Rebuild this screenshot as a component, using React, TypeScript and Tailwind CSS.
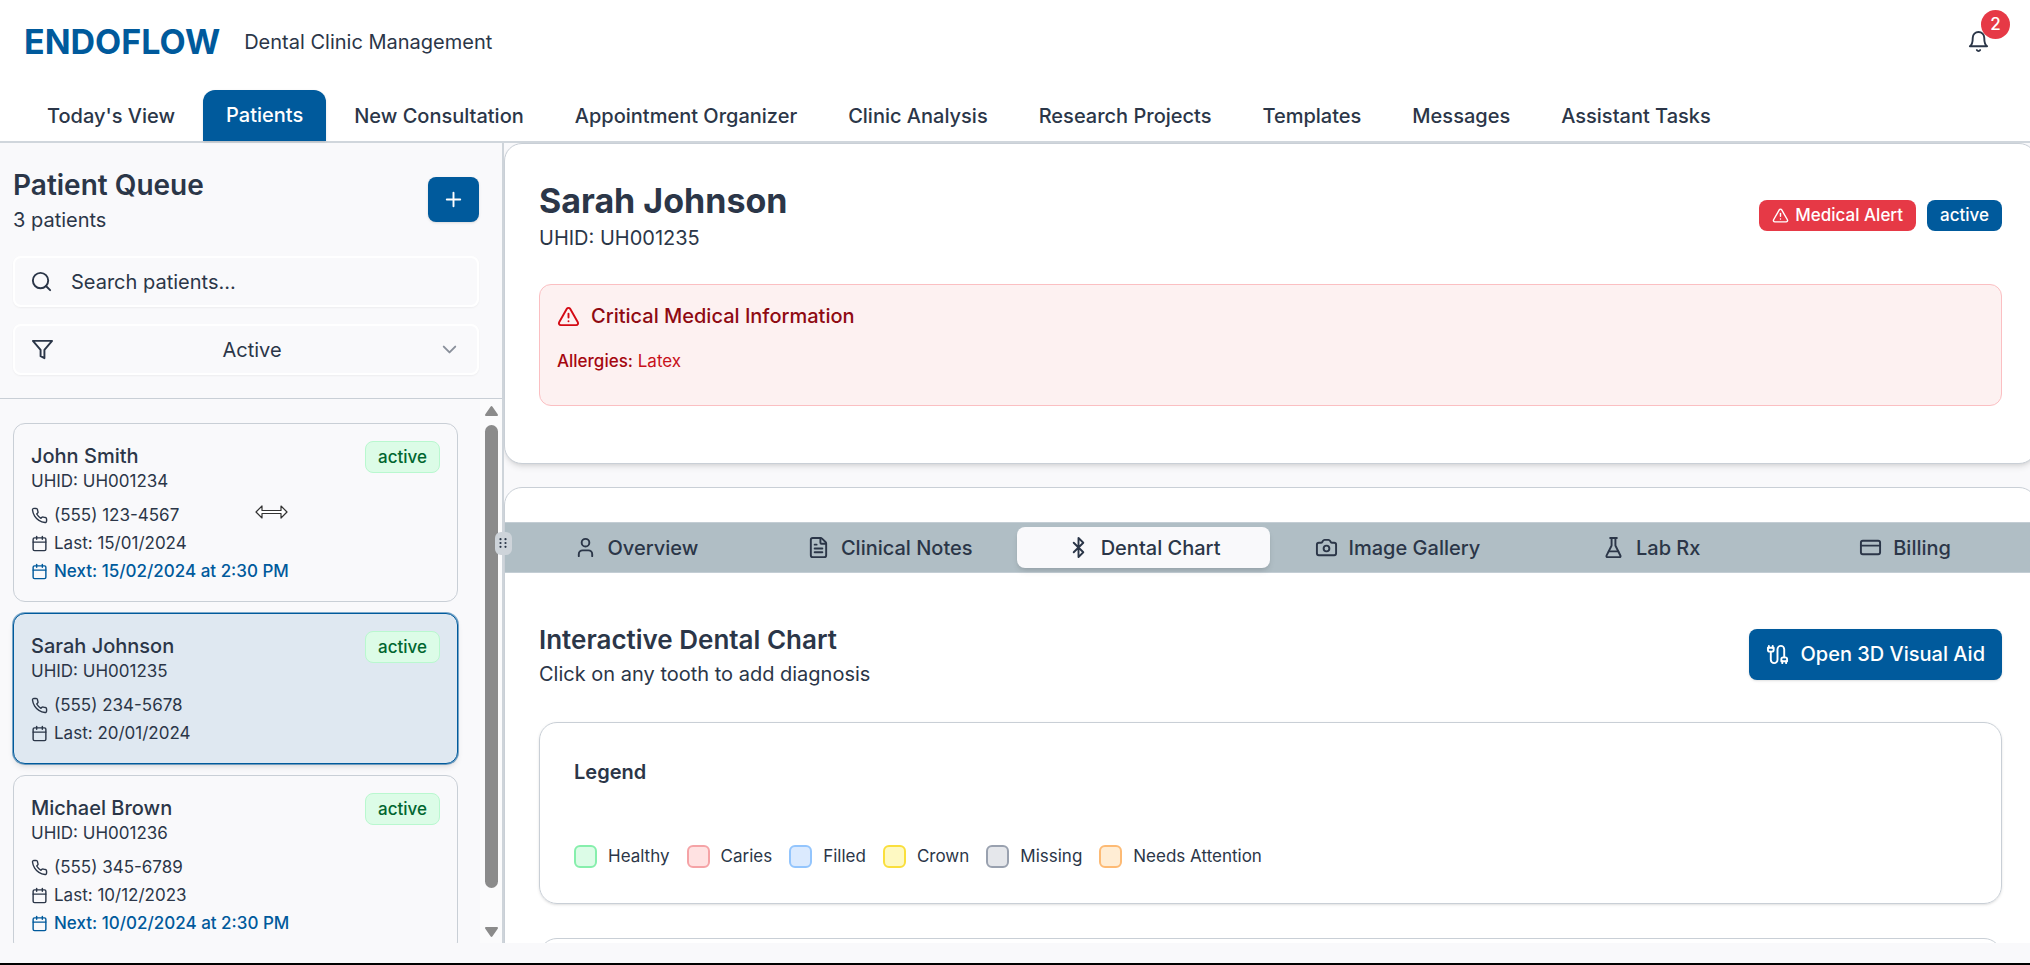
import type { ReactNode } from "react";
import { AlertTriangle, Bluetooth, Calendar, Camera, ChevronDown, CreditCard, FileText, Plus, Search, User } from "lucide-react";

type IconProps = { className?: string };

function LineIcon({ className, children }: IconProps & { children: ReactNode }) {
  return (
    <svg
      viewBox="0 0 24 24"
      fill="none"
      stroke="currentColor"
      strokeWidth="2"
      strokeLinecap="round"
      strokeLinejoin="round"
      aria-hidden="true"
      className={className}
    >
      {children}
    </svg>
  );
}

function BellIcon({ className }: IconProps) {
  return (
    <LineIcon className={className}>
      <path d="M6 8a6 6 0 0 1 12 0c0 7 3 9 3 9H3s3-2 3-9" />
      <path d="M10.3 21a1.94 1.94 0 0 0 3.4 0" />
    </LineIcon>
  );
}

function FilterIcon({ className }: IconProps) {
  return (
    <LineIcon className={className}>
      <path d="M22 3H2l8 9.460V19l4 2v-8.540L22 3z" />
    </LineIcon>
  );
}

function PhoneIcon({ className }: IconProps) {
  return (
    <LineIcon className={className}>
      <path d="M22 16.92v3a2 2 0 0 1-2.18 2 19.79 19.79 0 0 1-8.63-3.07 19.5 19.5 0 0 1-6-6 19.79 19.79 0 0 1-3.07-8.67A2 2 0 0 1 4.11 2h3a2 2 0 0 1 2 1.72 12.84 12.84 0 0 0 .7 2.81 2 2 0 0 1-.45 2.11L8.09 9.91a16 16 0 0 0 6 6l1.27-1.27a2 2 0 0 1 2.11-.45 12.84 12.84 0 0 0 2.81.7A2 2 0 0 1 22 16.92z" />
    </LineIcon>
  );
}

function FlaskIcon({ className }: IconProps) {
  return (
    <LineIcon className={className}>
      <path d="M10 2v7.527a2 2 0 0 1-.211.896L4.72 20.55a1 1 0 0 0 .9 1.45h12.76a1 1 0 0 0 .9-1.45l-5.069-10.127A2 2 0 0 1 14 9.527V2" />
      <path d="M8.5 2h7" />
      <path d="M7 16h10" />
    </LineIcon>
  );
}

function CableIcon({ className }: IconProps) {
  return (
    <LineIcon className={className}>
      <path d="M4 9a2 2 0 0 1-2-2V5h6v2a2 2 0 0 1-2 2Z" />
      <path d="M3 5V3" />
      <path d="M7 5V3" />
      <path d="M19 15V6.5a3.5 3.5 0 0 0-7 0v11a3.5 3.5 0 0 1-7 0V9" />
      <path d="M17 21v-2" />
      <path d="M21 21v-2" />
      <path d="M22 19h-6v-2a2 2 0 0 1 2-2h2a2 2 0 0 1 2 2Z" />
    </LineIcon>
  );
}

const navItems = [
  "Today's View",
  "Patients",
  "New Consultation",
  "Appointment Organizer",
  "Clinic Analysis",
  "Research Projects",
  "Templates",
  "Messages",
  "Assistant Tasks",
];

const patients = [
  { name: "John Smith", uhid: "UH001234", phone: "(555) 123-4567", last: "15/01/2024", next: "15/02/2024 at 2:30 PM" },
  { name: "Sarah Johnson", uhid: "UH001235", phone: "(555) 234-5678", last: "20/01/2024", next: null },
  { name: "Michael Brown", uhid: "UH001236", phone: "(555) 345-6789", last: "10/12/2023", next: "10/02/2024 at 2:30 PM" },
];

const chartTabs = [
  { label: "Overview", Icon: User },
  { label: "Clinical Notes", Icon: FileText },
  { label: "Dental Chart", Icon: Bluetooth },
  { label: "Image Gallery", Icon: Camera },
  { label: "Lab Rx", Icon: FlaskIcon },
  { label: "Billing", Icon: CreditCard },
];

const legend = [
  { label: "Healthy", swatch: "bg-[#dcfce7] border-[#86efac]" },
  { label: "Caries", swatch: "bg-[#ffe2e2] border-[#f5a3a6]" },
  { label: "Filled", swatch: "bg-[#dbeafe] border-[#93c5fd]" },
  { label: "Crown", swatch: "bg-[#fef9c2] border-[#fadf3c]" },
  { label: "Missing", swatch: "bg-[#e5e7eb] border-[#99a1af]" },
  { label: "Needs Attention", swatch: "bg-[#ffedd4] border-[#fdba74]" },
];

function Header() {
  return (
    <header className="border-b-2 border-[#d0d6dc] bg-white">
      <div className="flex h-[83px] items-center justify-between pr-10 pl-6">
        <div className="flex items-center gap-6">
          <h1 className="text-[34px] leading-10 font-bold text-[#005a9c]">ENDOFLOW</h1>
          <p className="text-[20px] leading-7">Dental Clinic Management</p>
        </div>
        <button type="button" aria-label="Notifications, 2 unread" className="relative">
          <BellIcon className="size-[23px]" />
          <span className="absolute -top-5 -right-5 flex size-[29px] items-center justify-center rounded-full bg-[#e63946] text-[17px] font-medium text-white">
            2
          </span>
        </button>
      </div>
      <nav className="flex h-[58px] items-end gap-[5px] pl-6 text-[20px] font-medium">
        {navItems.map((item) => (
          <a
            key={item}
            href="#"
            className={
              item === "Patients"
                ? "flex h-[51px] items-center rounded-t-xl bg-[#005a9c] px-[23px] pb-[2px] text-white shadow-sm"
                : "flex h-[51px] items-center px-[23px]"
            }
          >
            {item}
          </a>
        ))}
      </nav>
    </header>
  );
}

function PatientCard({ patient, selected }: { patient: (typeof patients)[number]; selected: boolean }) {
  return (
    <li
      className={
        selected
          ? "rounded-xl border border-[#005a9c] bg-[#dfe8f1] px-[17px] pt-[17px] pb-4 shadow-md ring-1 ring-[#005a9c]/50"
          : "rounded-xl border border-[#c9cfd6] px-[17px] pt-[17px] pb-4"
      }
    >
      <div className="flex items-start justify-between">
        <div>
          <h3 className="text-[20px] leading-[30px] font-medium">{patient.name}</h3>
          <p className="text-[17px] leading-5">UHID: {patient.uhid}</p>
        </div>
        <span className="rounded-lg border border-[#b9f8cf] bg-[#dcfce7] px-3 text-[17px] leading-[30px] font-medium text-[#016630]">
          active
        </span>
      </div>
      <div className="mt-[10px] text-[17px] leading-7">
        <p className="flex items-center gap-[6px]">
          <PhoneIcon className="size-[17px]" />
          {patient.phone}
        </p>
        <p className="flex items-center gap-[6px]">
          <Calendar className="size-[17px]" />
          Last: {patient.last}
        </p>
        {patient.next && (
          <p className="flex items-center gap-[6px] font-medium text-[#005a9c]">
            <Calendar className="size-[17px]" />
            Next: {patient.next}
          </p>
        )}
      </div>
    </li>
  );
}

function Sidebar() {
  return (
    <aside className="flex w-[502px] shrink-0 flex-col">
      <div className="border-b border-[#c9cfd6] pt-[21px] pr-[23px] pb-[23px] pl-[13px]">
        <div className="flex items-center justify-between">
          <div>
            <h2 className="text-[28px] leading-[42px] font-semibold">Patient Queue</h2>
            <p className="text-[20px] leading-7">3 patients</p>
          </div>
          <button
            type="button"
            aria-label="Add patient"
            className="flex h-[45px] w-[51px] items-center justify-center rounded-lg bg-[#005a9c] text-white shadow-sm"
          >
            <Plus className="size-[23px]" />
          </button>
        </div>
        <label className="mt-[22px] flex h-[51px] items-center gap-[18px] rounded-lg border-2 border-white pl-[15px] shadow-xs">
          <Search className="size-[23px] shrink-0" />
          <input
            type="text"
            aria-label="Search patients"
            placeholder="Search patients..."
            className="w-full bg-transparent text-[20px] outline-none placeholder:text-[#2b3648] placeholder:opacity-100"
          />
        </label>
        <div className="mt-[17px] flex h-[51px] items-center rounded-lg border-2 border-white px-4 shadow-xs">
          <FilterIcon className="size-[23px] shrink-0" />
          <select
            aria-label="Filter by status"
            className="h-full w-full appearance-none bg-transparent pl-3 text-center text-[20px] outline-none"
          >
            <option>Active</option>
          </select>
          <ChevronDown className="size-[23px] shrink-0 text-[#8a909b]" />
        </div>
      </div>
      <div className="flex min-h-0 flex-1">
        <ul className="flex min-h-0 flex-1 flex-col gap-[11px] overflow-hidden pt-6 pr-[22px] pb-4 pl-[13px] *:shrink-0">
          {patients.map((patient) => (
            <PatientCard key={patient.uhid} patient={patient} selected={patient.uhid === "UH001235"} />
          ))}
        </ul>
        <div aria-hidden="true" className="flex w-[22px] flex-col items-center bg-[#fbfbfc] pt-[7px] pb-[6px] pl-px">
          <svg viewBox="0 0 13 10" className="h-[10px] w-[13px]" fill="#8b8b8b">
            <path d="M5.5.8a1.2 1.2 0 0 1 2 0l5.2 7.4c.6.9.1 1.8-.9 1.8H1.2C.2 10-.3 9.100.3 8.200z" />
          </svg>
          <div className="mt-[9px] h-[463px] w-[13px] rounded-full bg-[#8b8b8b]" />
          <svg viewBox="0 0 13 10" className="mt-auto h-[10px] w-[13px]" fill="#8b8b8b">
            <path d="M5.500 9.200a1.200 1.200 0 0 0 2 0l5.200-7.400c.6-.9.100-1.800-.9-1.800H1.200C.2 0-.3.900.3 1.800z" />
          </svg>
        </div>
      </div>
    </aside>
  );
}

function ResizeHandle() {
  return (
    <div role="separator" className="relative flex w-[2px] shrink-0 items-center justify-center bg-[#ced4da]">
      <div className="absolute z-10 flex h-[23px] w-[17px] items-center justify-center rounded-md bg-[#ced4da]">
        <svg viewBox="0 0 8 10" className="h-[10px] w-2" fill="#2b3648">
          <circle cx="1.500" cy="1.200" r="1.100" />
          <circle cx="1.500" cy="5" r="1.100" />
          <circle cx="1.500" cy="8.800" r="1.100" />
          <circle cx="6.500" cy="1.200" r="1.100" />
          <circle cx="6.500" cy="5" r="1.100" />
          <circle cx="6.500" cy="8.800" r="1.100" />
        </svg>
      </div>
    </div>
  );
}

function PatientHeader() {
  return (
    <section className="rounded-[18px] border border-[#c9cfd6] bg-white px-[34px] pt-[34px] pb-[57px] shadow-md">
      <div className="flex items-center justify-between">
        <div>
          <h2 className="text-[34px] leading-[46px] font-bold">Sarah Johnson</h2>
          <p className="text-[20px] leading-7">UHID: UH001235</p>
        </div>
        <div className="flex items-center gap-[11px] text-[17px] leading-[31px] font-medium text-white">
          <span className="flex items-center gap-[6px] rounded-lg bg-[#e63946] px-[13px]">
            <AlertTriangle className="size-[17px]" />
            Medical Alert
          </span>
          <span className="rounded-lg bg-[#005a9c] px-[13px]">active</span>
        </div>
      </div>
      <div className="mt-8 h-[122px] rounded-xl border border-[#fbbfc2] bg-[#fdf1f1] px-[17px] pt-[17px]">
        <h3 className="flex items-center gap-[11px] text-[20px] leading-7 font-medium text-[#8f0a12]">
          <AlertTriangle className="size-[23px] text-[#d40a14]" />
          Critical Medical Information
        </h3>
        <p className="mt-[17px] text-[17px] leading-7 text-[#c8101a]">
          <strong className="font-medium text-[#a50710]">Allergies:</strong> Latex
        </p>
      </div>
    </section>
  );
}

function ChartTabs() {
  return (
    <div role="tablist" className="grid h-[51px] grid-cols-6 items-center border-y border-[#c3cdd4] bg-[#b0bec5] px-1 text-[20px] font-medium">
      {chartTabs.map(({ label, Icon }) => (
        <button
          key={label}
          type="button"
          role="tab"
          aria-selected={label === "Dental Chart"}
          className={
            label === "Dental Chart"
              ? "flex h-[41px] items-center justify-center gap-[11px] rounded-lg bg-[#f9f9fb] shadow-md"
              : "flex h-[41px] items-center justify-center gap-[11px]"
          }
        >
          <Icon className="size-[23px]" />
          {label}
        </button>
      ))}
    </div>
  );
}

function DentalChart() {
  return (
    <section className="mt-[23px] rounded-t-[18px] border border-[#c9cfd6] bg-white pt-[34px]">
      <ChartTabs />
      <div className="px-[34px] pt-[47px]">
        <div className="flex items-center justify-between">
          <div>
            <h3 className="text-[26px] leading-10 font-semibold">Interactive Dental Chart</h3>
            <p className="text-[20px] leading-7">Click on any tooth to add diagnosis</p>
          </div>
          <button
            type="button"
            className="flex h-[51px] items-center gap-[11px] rounded-lg bg-[#005a9c] px-[17px] text-[20px] font-medium text-white shadow-sm"
          >
            <CableIcon className="size-[23px]" />
            Open 3D Visual Aid
          </button>
        </div>
        <div className="mt-[34px] h-[182px] rounded-[18px] border border-[#c9cfd6] px-[34px] pt-[34px] shadow-sm">
          <h4 className="text-[20px] leading-[30px] font-semibold">Legend</h4>
          <ul className="mt-[55px] flex items-center gap-[17px] text-[17px] leading-7">
            {legend.map(({ label, swatch }) => (
              <li key={label} className="flex items-center gap-[11px]">
                <span className={`size-[23px] rounded-md border-2 ${swatch}`} />
                {label}
              </li>
            ))}
          </ul>
        </div>
        <div className="mt-[34px] h-[182px] rounded-[18px] border border-[#c9cfd6]" />
      </div>
    </section>
  );
}

export default function App() {
  return (
    <div className="relative flex h-screen flex-col overflow-hidden border-b-2 border-black bg-[#f9f9fb] font-['Inter',sans-serif] text-[#2b3648]">
      <Header />
      <div className="flex min-h-0 flex-1">
        <Sidebar />
        <ResizeHandle />
        <main className="min-w-0 flex-1 overflow-hidden">
          <div className="-mr-[7px]">
            <PatientHeader />
            <DentalChart />
          </div>
        </main>
      </div>
      <div className="h-5 shrink-0" />
      <svg viewBox="0 0 33 14" className="absolute top-[505px] left-[255px] h-[14px] w-[33px]" fill="white" stroke="#333" strokeWidth="1.200" strokeLinejoin="round">
        <path d="M1 7 7 1v4.500h19V1l6 6-6 6V8.500H7V13z" />
      </svg>
    </div>
  );
}
